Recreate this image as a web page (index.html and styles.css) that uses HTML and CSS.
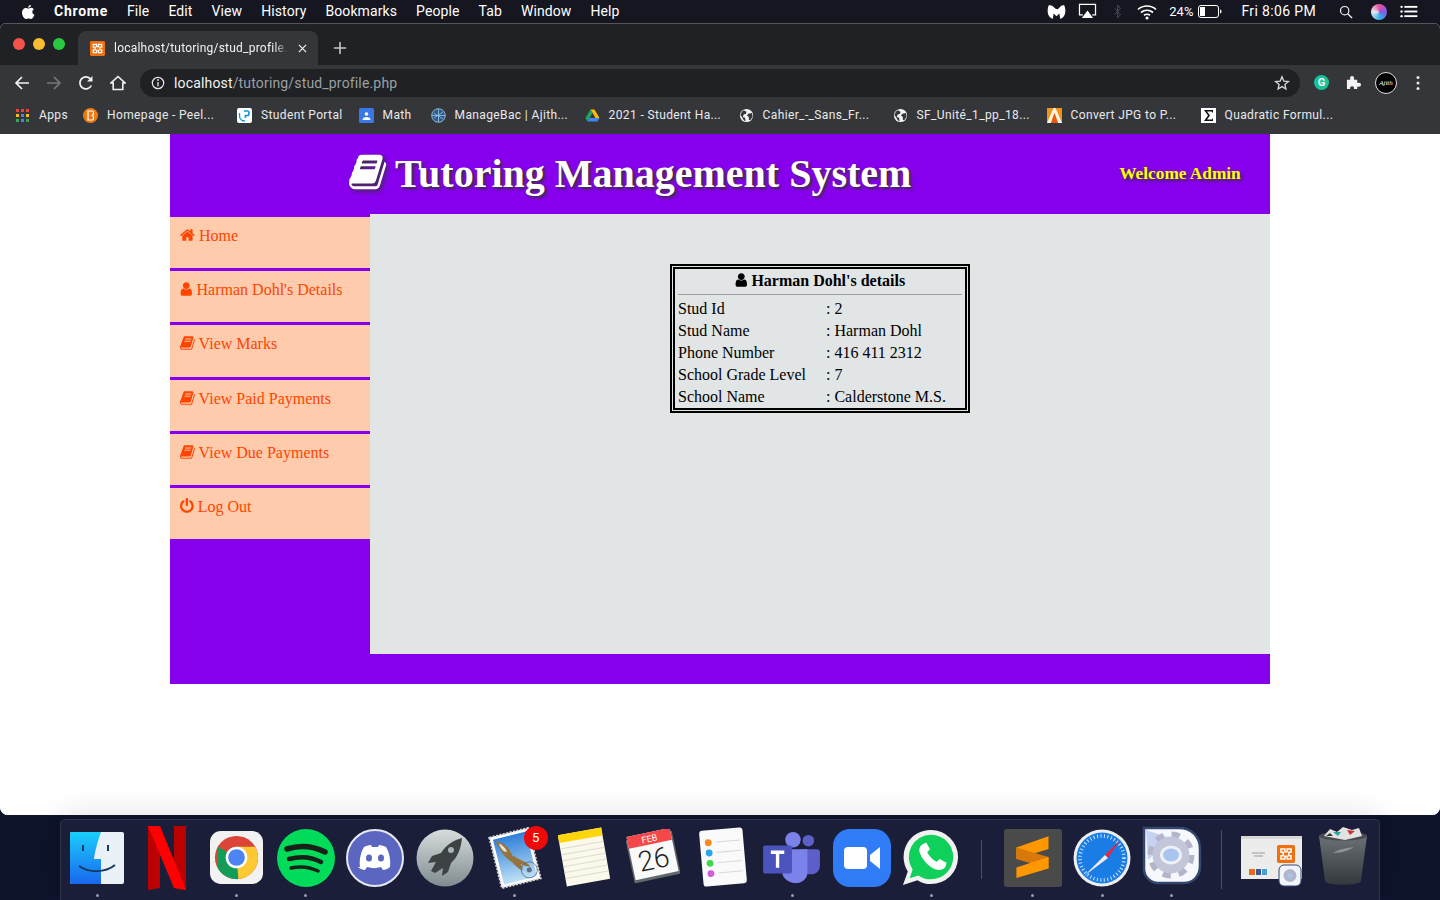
FILE: index.html
```html
<!DOCTYPE html>
<html lang="en">
<head>
<meta charset="utf-8">
<title>Tutoring Management System</title>
<link rel="stylesheet" href="styles.css">
</head>
<body>
<svg class="defs" width="0" height="0" aria-hidden="true">
  <symbol id="i-user" viewBox="192 0 1408 1792"><path d="M1536 1399q0 109-62.5 187t-150.5 78h-854q-88 0-150.5-78t-62.5-187q0-85 8.5-160.5t31.5-152 58.5-131 94-89 134.5-34.5q131 128 313 128t313-128q76 0 134.5 34.5t94 89 58.5 131 31.5 152 8.5 160.5zm-256-887q0 159-112.5 271.5t-271.5 112.5-271.5-112.5-112.5-271.5 112.5-271.5 271.5-112.5 271.5 112.5 112.5 271.5z"/></symbol>
  <symbol id="i-home" viewBox="64 0 1664 1792"><path d="M1472 992v480q0 26-19 45t-45 19h-384v-384h-256v384h-384q-26 0-45-19t-19-45v-480q0-1 .5-3t.5-3l575-474 575 474q1 2 1 6zm223-69l-62 74q-8 9-21 11h-3q-13 0-21-7l-692-577-692 577q-12 8-24 7-13-2-21-11l-62-74q-8-10-7-23.5t11-21.5l719-599q32-26 76-26t76 26l244 204v-195q0-14 9-23t23-9h192q14 0 23 9t9 23v408l219 182q10 8 11 21.5t-7 23.5z"/></symbol>
  <symbol id="i-book" viewBox="64 0 1664 1792"><path d="M1703 478q40 57 18 129l-275 906q-19 64-76.5 107.5t-122.5 43.5h-923q-77 0-148.5-53.5t-99.5-131.5q-24-67-2-127 0-4 3-27t4-37q1-8-3-21.5t-3-19.5q2-11 8-21t16.5-23.5 16.5-23.5q23-38 45-91.5t30-91.5q3-10 .5-30t-.5-28q3-11 17-28t17-23q21-36 42-92t25-90q1-9-2.5-32t.5-28q4-13 22-30.5t22-22.5q19-26 42.5-84.5t27.5-96.5q1-8-3-25.5t-2-26.5q2-8 9-18t18-23 17-21q8-12 16.5-30.5t15-35 16-36 19.5-32 26.5-23.5 36-11.5 47.5 5.5l-1 3q38-9 51-9h761q74 0 114 56t18 130l-274 906q-36 119-71.5 153.5t-128.5 34.5h-869q-27 0-38 15-11 16-1 43 24 70 144 70h923q29 0 56-15.5t35-41.5l300-987q7-22 5-57 38 15 59 43zm-1064 2q-4 13 2 22.5t20 9.5h608q13 0 25.5-9.5t16.5-22.5l21-64q4-13-2-22.5t-20-9.5h-608q-13 0-25.5 9.5t-16.5 22.5zm-83 256q-4 13 2 22.5t20 9.5h608q13 0 25.5-9.5t16.5-22.5l21-64q4-13-2-22.5t-20-9.5h-608q-13 0-25.5 9.5t-16.5 22.5z"/></symbol>
  <symbol id="i-power" viewBox="128 0 1536 1792"><path d="M1664 896q0 156-61 298t-164 245-245 164-298 61-298-61-245-164-164-245-61-298q0-182 80.5-343t226.5-270q43-32 95.5-25t83.5 50q32 42 24.5 94.5t-49.5 84.5q-98 74-151.5 181t-53.5 228q0 104 40.5 198.5t109.5 163.5 163.5 109.5 198.5 40.5 198.5-40.5 163.5-109.5 109.5-163.5 40.5-198.5q0-121-53.5-228t-151.5-181q-42-32-49.5-84.5t24.5-94.5q31-43 84-50t95 25q146 109 226.5 270t80.5 343zm-640-768v640q0 52-38 90t-90 38-90-38-38-90v-640q0-52 38-90t90-38 90 38 38 90z"/></symbol>
  <symbol id="i-globe" viewBox="0 0 16 16"><circle cx="8" cy="8" r="7" fill="#f1f3f4"/><path d="M5 2.500 8 4 7.500 6 5 7 4 9.500 6.500 10.500 7 14 5 13 3.500 10 1.500 7.500 3 4zM10 6l3.800-.8L14.500 9 12 13 10.500 12.500 10.500 9.500 8.500 8z" fill="#35363a"/></symbol>
  <symbol id="i-xampp" viewBox="0 0 16 16"><rect width="16" height="16" rx="1.500" fill="#f0700f"/><path d="M3.500 3.500h3.500v2.500h2V3.500h3.500v3h-2v3h2v3H9V10H7v2.500H3.500v-3h2v-3h-2z" fill="none" stroke="#fff" stroke-width="1.300"/></symbol>
</svg>

<header class="menubar">
  <svg class="apple" viewBox="0 0 14 16"><path d="M10 1c.1 1.200-1.100 2.800-2.800 2.800C7 2.300 8.500 1.100 10 1zM7.200 4.600c.7 0 1.600-.8 3-.8 1.100 0 2.100.6 2.700 1.500-2.300 1.400-1.900 4.500.6 5.500-.6 1.600-2 4.200-3.400 4.200-.9 0-1.300-.6-2.500-.6s-1.600.6-2.500.6C3.300 15 1 11.600 1 8.500c0-2.900 1.900-4.600 3.800-4.600 1 0 1.900.7 2.400.7z" fill="#fff"/></svg>
  <nav class="menus">
    <span class="menu-strong">Chrome</span><span>File</span><span>Edit</span><span>View</span><span>History</span><span>Bookmarks</span><span>People</span><span>Tab</span><span>Window</span><span>Help</span>
  </nav>
  <div class="status">
    <svg class="st st-mb" viewBox="0 0 20 18"><path d="M2 2C.5 5-.5 11 3 15l3 2 1-6 3 3 3-3 1 6 3-2c3.500-4 2.500-10 1-13l-3 1-3 3-1 .5L9 6 5.500 3z" fill="#fff"/></svg>
    <svg class="st st-air" viewBox="0 0 20 18"><path d="M5 12.500H1.500v-11h17v11H15" fill="none" stroke="#fff" stroke-width="1.300"/><path d="M10 8l6 8H4z" fill="#fff"/></svg>
    <svg class="st st-bt" viewBox="0 0 10 18"><path d="M1 5l7 8-3.500 4V1L8 5l-7 8" fill="none" stroke="#4b4d55" stroke-width="1.200"/></svg>
    <svg class="st st-wifi" viewBox="0 0 20 16"><g fill="none" stroke="#fff" stroke-width="1.700"><path d="M1 5.500c5-4.700 13-4.700 18 0"/><path d="M4 8.500c3.500-3 8.500-3 12 0"/><path d="M7 11.300c2-1.400 4-1.400 6 0"/></g><circle cx="10" cy="14" r="1.500" fill="#fff"/></svg>
    <span class="st-pct">24%</span>
    <svg class="st st-bat" viewBox="0 0 24 13"><rect x=".5" y=".5" width="20" height="12" rx="2.500" fill="none" stroke="#fff"/><rect x="2" y="2" width="5" height="9" fill="#fff"/><path d="M22 4.500c1 .3 1.500 1 1.500 2s-.5 1.700-1.500 2z" fill="#fff"/></svg>
    <span class="st-time">Fri 8:06 PM</span>
    <svg class="st st-search" viewBox="0 0 16 16"><circle cx="6.500" cy="6.500" r="4.800" fill="none" stroke="#fff" stroke-width="1.300"/><path d="M10 10l5 5" stroke="#fff" stroke-width="1.500"/></svg>
    <span class="siri"></span>
    <svg class="st st-list" viewBox="0 0 20 14"><g fill="#fff"><circle cx="2" cy="2" r="1.300"/><circle cx="2" cy="7" r="1.300"/><circle cx="2" cy="12" r="1.300"/><rect x="5" y="1" width="14" height="2"/><rect x="5" y="6" width="14" height="2"/><rect x="5" y="11" width="14" height="2"/></g></svg>
  </div>
</header>

<div class="window">
  <div class="tabstrip">
    <div class="lights"><i class="l-red"></i><i class="l-yellow"></i><i class="l-green"></i></div>
    <div class="tab">
      <svg class="fav"><use href="#i-xampp"/></svg>
      <span class="tab-title">localhost/tutoring/stud_profile.</span>
      <svg class="tab-x" viewBox="0 0 10 10"><path d="M1 1l8 8M9 1l-8 8" stroke="#e8eaed" stroke-width="1.400"/></svg>
    </div>
    <svg class="tab-new" viewBox="0 0 12 12"><path d="M6 0v12M0 6h12" stroke="#c4c7c9" stroke-width="1.600"/></svg>
  </div>
  <div class="toolbar">
    <svg class="tb" viewBox="0 0 16 16"><path d="M15 8H2M8 2 2 8l6 6" fill="none" stroke="#f1f3f4" stroke-width="1.700"/></svg>
    <svg class="tb" viewBox="0 0 16 16"><path d="M1 8h13M8 2l6 6-6 6" fill="none" stroke="#75777b" stroke-width="1.700"/></svg>
    <svg class="tb" viewBox="0 0 16 16"><path d="M13.300 10.500A6 6 0 1 1 12.200 3.700" fill="none" stroke="#f1f3f4" stroke-width="1.700"/><path d="M14.500 1v5.500H9z" fill="#f1f3f4"/></svg>
    <svg class="tb" viewBox="0 0 16 16"><path d="M8 1.500 1 8h2.200v6.500h9.600V8H15z" fill="none" stroke="#f1f3f4" stroke-width="1.600"/></svg>
    <div class="omnibox">
      <svg class="info" viewBox="0 0 14 14"><circle cx="7" cy="7" r="5.700" fill="none" stroke="#e8eaed" stroke-width="1.200"/><path d="M7 6v4.300" stroke="#e8eaed" stroke-width="1.300"/><circle cx="7" cy="4" r=".9" fill="#e8eaed"/></svg>
      <span class="url"><b>localhost</b>/tutoring/stud_profile.php</span>
      <svg class="star" viewBox="0 0 16 16"><path d="M8 1.800l1.800 4.300 4.600.4-3.500 3 1 4.500L8 11.600 4.100 14l1-4.500-3.500-3 4.600-.4z" fill="none" stroke="#d6d8da" stroke-width="1.300"/></svg>
    </div>
    <div class="ext">
      <span class="grammarly">G</span>
      <svg class="puzzle" viewBox="0 0 16 16"><path d="M1 5h3.500C4 2 5 1 6.500 1S9 2 8.500 5H12v3.500c3-.5 4 .5 4 2s-1 2.500-4 2V15H8.500c.5-2-.5-3-2-3s-2.500 1-2 3H1z" fill="#f1f3f4"/></svg>
      <span class="avatar">Ajith</span>
      <svg class="dots" viewBox="0 0 4 16"><g fill="#e8eaed"><circle cx="2" cy="2.500" r="1.500"/><circle cx="2" cy="8" r="1.500"/><circle cx="2" cy="13.500" r="1.500"/></g></svg>
    </div>
  </div>
  <div class="bookmarks">
    <div class="bm bm-apps"><svg class="fav" viewBox="0 0 15 15"><g fill="#ea4335"><rect x="1" y="1" width="3" height="3"/><rect x="6" y="1" width="3" height="3"/><rect x="11" y="1" width="3" height="3"/></g><g fill="#fbbc05"><rect x="1" y="6" width="3" height="3"/><rect x="11" y="6" width="3" height="3"/></g><rect x="6" y="6" width="3" height="3" fill="#4285f4"/><g fill="#34a853"><rect x="1" y="11" width="3" height="3"/><rect x="11" y="11" width="3" height="3"/></g><rect x="6" y="11" width="3" height="3" fill="#4285f4"/></svg><span>Apps</span></div>
    <div class="bm bm-long"><svg class="fav" viewBox="0 0 15 15"><circle cx="7.500" cy="7.500" r="7.500" fill="#ef7a12"/><path d="M5 3h4c2 0 2 3.500.3 4.300C11 8 11 12 9 12H5z" fill="none" stroke="#fff" stroke-width="1.200"/></svg><span>Homepage - Peel...</span></div>
    <div class="bm"><svg class="fav" viewBox="0 0 15 15"><rect width="15" height="15" rx="2" fill="#fff"/><path d="M7 3h3.500c2 0 2 4.500 0 4.500H8.500V10" fill="none" stroke="#1497d8" stroke-width="1.700"/><path d="M2.500 5v3c0 3 2.500 5 5.500 5" fill="none" stroke="#1497d8" stroke-width="1.400"/></svg><span>Student Portal</span></div>
    <div class="bm bm-math"><svg class="fav" viewBox="0 0 15 15"><rect width="15" height="15" rx="1.500" fill="#3b78e7"/><circle cx="7.500" cy="6" r="1.800" fill="#fff"/><path d="M3.500 12c0-4 8-4 8 0z" fill="#fff"/></svg><span>Math</span></div>
    <div class="bm bm-long"><svg class="fav" viewBox="0 0 15 15"><circle cx="7.500" cy="7.500" r="6.800" fill="#2a5d8f" stroke="#9fb4c7"/><path d="M3 5l9 6M3 10l9-6M7.500 1v13M1 7.500h13" stroke="#9fc3e3" stroke-width=".8"/></svg><span>ManageBac | Ajith...</span></div>
    <div class="bm bm-long"><svg class="fav" viewBox="0 0 15 15"><path d="M5.500 1.500h4L14.500 10h-4z" fill="#fbbc05"/><path d="M5.500 1.500 .5 10l2 3.500L7.500 5z" fill="#1fa463"/><path d="M2.500 13.500h10l2-3.500H4.500z" fill="#4285f4"/></svg><span>2021 - Student Ha...</span></div>
    <div class="bm bm-long"><svg class="fav"><use href="#i-globe"/></svg><span>Cahier_-_Sans_Fr...</span></div>
    <div class="bm bm-long"><svg class="fav"><use href="#i-globe"/></svg><span>SF_Unité_1_pp_18...</span></div>
    <div class="bm bm-long"><svg class="fav" viewBox="0 0 15 15"><rect width="15" height="15" fill="#f29316"/><path d="M0 15 6.500 0h2L15 15H11L7.500 5 4 15z" fill="#fff" opacity=".9"/><path d="M4 15l3.500-10L11 15z" fill="#e8590c"/></svg><span>Convert JPG to P...</span></div>
    <div class="bm bm-long"><svg class="fav" viewBox="0 0 15 15"><rect width="15" height="15" fill="#fff"/><path d="M3 2h9v3l-1.500-1.500H6L9 7.500 6 11.500h5L12 10v3H3l4-5.500z" fill="#111"/></svg><span>Quadratic Formul...</span></div>
  </div>

  <main class="viewport">
    <div class="site">
      <div class="site-head">
        <h1 class="site-title"><svg class="title-icon"><use href="#i-book"/></svg> Tutoring Management System</h1>
        <div class="welcome">Welcome Admin</div>
      </div>
      <div class="site-body">
        <ul class="side">
          <li><a><svg class="ico w-wide"><use href="#i-home"/></svg> Home</a></li>
          <li><a><svg class="ico w-user"><use href="#i-user"/></svg> Harman Dohl's Details</a></li>
          <li><a><svg class="ico w-wide"><use href="#i-book"/></svg> View Marks</a></li>
          <li><a><svg class="ico w-wide"><use href="#i-book"/></svg> View Paid Payments</a></li>
          <li><a><svg class="ico w-wide"><use href="#i-book"/></svg> View Due Payments</a></li>
          <li><a><svg class="ico w-power"><use href="#i-power"/></svg> Log Out</a></li>
        </ul>
        <section class="content">
          <div class="card">
            <h3 class="card-title"><svg class="ico w-user"><use href="#i-user"/></svg> Harman Dohl's details</h3>
            <div class="rule"></div>
            <table class="details">
              <tr><td class="k">Stud Id</td><td>: 2</td></tr>
              <tr><td class="k">Stud Name</td><td>: Harman Dohl</td></tr>
              <tr><td class="k">Phone Number</td><td>: 416 411 2312</td></tr>
              <tr><td class="k">School Grade Level</td><td>: 7</td></tr>
              <tr><td class="k">School Name</td><td>: Calderstone M.S.</td></tr>
            </table>
          </div>
        </section>
      </div>
      <div class="site-foot"></div>
    </div>
  </main>
</div>

<footer class="dock-area">
  <div class="dock">
    <div class="app run"><svg class="d-finder" viewBox="0 0 54 52"><defs><linearGradient id="g-finder" x1="0" y1="0" x2="0" y2="1"><stop offset="0" stop-color="#19cffc"/><stop offset="1" stop-color="#1a66ee"/></linearGradient></defs><rect width="54" height="52" rx="2" fill="#eaf2f8"/><path d="M2 0h29c-3 8-6 19-7 27h7v25H2a2 2 0 0 1-2-2V2a2 2 0 0 1 2-2z" fill="url(#g-finder)"/><path d="M13 13v6M38 13v6" stroke="#163c5c" stroke-width="2"/><path d="M9 34c10 7 26 7 36-1" fill="none" stroke="#163c5c" stroke-width="2"/></svg></div>
    <div class="app"><svg class="d-netflix" viewBox="0 0 38 66"><path d="M0 1h12v62L0 65z" fill="#b00"/><path d="M26 1h12v64l-12-2z" fill="#b00"/><path d="M0 1h12l26 64-12-2z" fill="#f00"/></svg></div>
    <div class="app run"><svg class="d-chrome" viewBox="0 0 54 54"><rect width="54" height="54" rx="11" fill="#f2f2f2"/><circle cx="27" cy="27" r="22" fill="#db4437"/><path d="M27 27 8 38a22 22 0 0 0 21 11z" fill="#0f9d58"/><path d="M27 27l2 22A22 22 0 0 0 49 27 22 22 0 0 0 46 16H27z" fill="#fcc934"/><path d="M8 16 8 38 27 27z" fill="#0f9d58"/><circle cx="27" cy="27" r="11" fill="#fff"/><circle cx="27" cy="27" r="8.500" fill="#4d84f3"/></svg></div>
    <div class="app run"><svg class="d-58" viewBox="0 0 58 58"><circle cx="29" cy="29" r="29" fill="#00dc5a"/><g fill="none" stroke="#17211a" stroke-linecap="round"><path d="M10 20c13-4 26-3 38 3" stroke-width="5.500"/><path d="M12 30c11-3 23-2 32 3" stroke-width="4.500"/><path d="M14 39c9-2 19-1 27 3" stroke-width="3.500"/></g></svg></div>
    <div class="app"><svg class="d-58" viewBox="0 0 58 58"><circle cx="29" cy="29" r="28" fill="#5a66bf" stroke="#e6e8f4" stroke-width="2"/><path d="M14 38c-1-8 1-15 4-20 3-1.500 6-2 7-2l1 2h6l1-2c2 0 5 1 7 2 3 5 5 12 4 20-2 2-5 3-7 3l-2-3c-5 1.500-9 1.500-14 0l-2 3c-2 0-5-1-7-3z" fill="#fff"/><ellipse cx="23" cy="29" rx="3" ry="3.500" fill="#5a66bf"/><ellipse cx="35" cy="29" rx="3" ry="3.500" fill="#5a66bf"/></svg></div>
    <div class="app"><svg class="d-58" viewBox="0 0 58 58"><defs><linearGradient id="g-rocket" x1="0" y1="0" x2="0" y2="1"><stop offset="0" stop-color="#d8dcdc"/><stop offset="1" stop-color="#7f8c8f"/></linearGradient></defs><circle cx="29" cy="29" r="28.500" fill="url(#g-rocket)"/><path d="M46 9c-8 2-16 7-21 15l-9 3-4 7 8-1-5 9 4 2 8-5-1 8 6-4 3-9c7-6 10-15 11-25z" fill="#3d4245"/><circle cx="35" cy="21" r="3" fill="#aab3b5"/></svg></div>
    <div class="app run"><svg class="d-mail" viewBox="0 0 60 62"><defs><linearGradient id="g-sky" x1="0" y1="0" x2="0" y2="1"><stop offset="0" stop-color="#2f7fd8"/><stop offset="1" stop-color="#bfe0f6"/></linearGradient></defs><g transform="rotate(-14 31 31)"><rect x="11" y="5" width="40" height="52" fill="#fff" stroke="#d5d5d5" stroke-width="2" stroke-dasharray="2 1.500"/><rect x="14" y="8" width="34" height="46" fill="url(#g-sky)"/><path d="M16 10c6 2 10 7 12 13l1 5 8 7c3 2 5 4 7 8-4-1-6-2-9-5 1 3 1 5 0 7-3-3-6-7-8-11-4-4-7-9-8-14z" fill="#96743e"/><path d="M19 13c3 2 5 6 6 10l-3-1c-2-3-3-6-3-9z" fill="#e9e2cf"/><circle cx="42" cy="46" r="8" fill="none" stroke="#5a6d86" stroke-width=".8"/><circle cx="42" cy="46" r="2.500" fill="#5a6d86"/></g></svg><span class="badge">5</span></div>
    <div class="app"><svg class="d-notes" viewBox="0 0 52 62"><g transform="rotate(-10 26 31)"><rect x="4" y="5" width="44" height="52" fill="#fbf9ec"/><rect x="4" y="5" width="44" height="8" fill="#fdd60a"/><path d="M4 19h44M4 25h44M4 31h44M4 37h44M4 43h44M4 49h44" stroke="#d8d6c8" stroke-width=".8"/></g></svg></div>
    <div class="app"><svg class="d-cal" viewBox="0 0 54 56"><g transform="rotate(-12 27 27)"><rect x="3.500" y="6" width="47" height="44" rx="1" fill="#5f6a6d"/><rect x="5" y="3" width="44" height="44" fill="#fafafa"/><rect x="5" y="3" width="44" height="12" fill="#f44848"/><text class="cal-m" x="27" y="12.500">FEB</text><text class="cal-d" x="27" y="40">26</text></g></svg></div>
    <div class="app"><svg class="d-rem" viewBox="0 0 50 58"><g transform="rotate(-5 25 29)"><rect x="4" y="2" width="42" height="54" rx="3" fill="#fafafa"/><circle cx="12" cy="14" r="3.300" fill="#f58a1f"/><circle cx="12" cy="24" r="3.300" fill="#25a6ee"/><circle cx="12" cy="34" r="3.300" fill="#3fd84c"/><circle cx="12" cy="44" r="3.300" fill="#d45ae0"/><path d="M19 14h24M19 24h24M19 34h24M19 44h24" stroke="#d9d9d9"/></g></svg></div>
    <div class="app run"><svg class="d-teams" viewBox="0 0 60 54"><circle cx="47" cy="9" r="6" fill="#5b5fc7"/><circle cx="31" cy="8" r="8" fill="#7b83eb"/><path d="M38 18h18c2 0 3 1 3 3v14c0 6-5 9-9 9H38z" fill="#5b5fc7"/><path d="M20 18h26v24c0 7-6 11-12 11s-14-4-14-11z" fill="#7b83eb"/><rect x="0" y="14" width="30" height="29" rx="2" fill="#4b53bc"/><path d="M8 21h14M15 21v16" stroke="#fff" stroke-width="3.500"/></svg></div>
    <div class="app"><svg class="d-58" viewBox="0 0 58 58"><rect width="58" height="58" rx="17" fill="#2f7cf6"/><rect x="11" y="18" width="23" height="22" rx="4" fill="#fff"/><path d="M37 26l10-8v22l-10-8z" fill="#fff"/></svg></div>
    <div class="app run"><svg class="d-58" viewBox="0 0 60 60"><path d="M30 1a28 28 0 0 1 0 56c-5 0-10-1-14-4L1 58l5-14A28 28 0 0 1 30 1z" fill="#f2f2f2"/><path d="M30 6a23 23 0 0 1 0 46c-5 0-9-1-13-4l-9 3 3-9A23 23 0 0 1 30 6z" fill="#0fd05a"/><path d="M21 16c-3 2-4 6-2 10 3 7 9 13 16 16 4 1 8 0 10-3l1-4-7-4-3 3c-4-2-8-6-10-10l3-3-4-7z" fill="#fff"/></svg></div>
    <div class="sep sep-short"></div>
    <div class="app run"><svg class="d-58" viewBox="0 0 58 58"><rect width="58" height="58" rx="3" fill="#4a4a4a"/><path d="M44.500 7.300 12.400 18.500V30L44.500 20z" fill="#ff9800"/><path d="M12.400 18.500 44.500 28v11.500L12.400 30z" fill="#d9780a"/><path d="M44.500 28 12.400 38.500V49L44.500 39.500z" fill="#ff9800"/></svg></div>
    <div class="app run"><svg class="d-58" viewBox="0 0 58 58"><circle cx="29" cy="29" r="28.500" fill="#eee"/><circle cx="29" cy="29" r="25.500" fill="#1a7de6"/><circle cx="29" cy="29" r="22" fill="none" stroke="#cfe6fb" stroke-width="3.500" stroke-dasharray="1 2.500"/><path d="M32 26l15-15-12 18z" fill="#e8263a"/><path d="M32 26 11 47l24-18z" fill="#eee"/></svg></div>
    <div class="app run"><svg class="d-prefs" viewBox="0 0 60 60"><path d="M2 2h35c12 0 21 8 21 21v17c0 10-7 17-16 17H16C8 57 2 50 2 43z" fill="#f7f8fd" stroke="#34486f" stroke-width="2.500"/><path d="M4 4 28 12 6 34z" fill="#c5d2f0"/><g transform="translate(29 29)"><circle r="20" fill="none" stroke="#b3b5cb" stroke-width="7" stroke-dasharray="8 7.700"/><circle r="18.500" fill="#c3c5d8"/><ellipse rx="11" ry="9.500" fill="#eef0f7"/><ellipse rx="8" ry="6.500" fill="#a9c4ee"/></g></svg></div>
    <div class="sep"></div>
    <div class="app"><svg class="d-xampp" viewBox="0 0 64 52"><rect width="61" height="43" fill="#ececec"/><rect width="61" height="3" fill="#d8d8d8"/><path d="M11 17h13M13 20h9" stroke="#9a9a9a"/><use href="#i-xampp" x="36" y="9" width="18" height="18"/><rect x="8" y="33" width="6" height="6" fill="#e56a19"/><rect x="15" y="33" width="5" height="6" fill="#3b5998"/><rect x="21" y="33" width="5" height="6" fill="#4aa1d8"/><rect x="38" y="29" width="22" height="21" rx="5" fill="#f2f5fb" stroke="#34486f"/><circle cx="49" cy="39.500" r="6.500" fill="#b3b5cb"/><circle cx="49" cy="39.500" r="2.500" fill="#a9c4ee"/></svg></div>
    <div class="app"><svg class="d-trash" viewBox="0 0 54 60"><defs><linearGradient id="g-trash" x1="0" y1="0" x2="0" y2="1"><stop offset="0" stop-color="#6a7073"/><stop offset="1" stop-color="#33383b"/></linearGradient></defs><path d="M3 9h48l-6 45c-1 5-35 5-36 0z" fill="url(#g-trash)"/><path d="M17 26c6-4 14-5 21-6-4 3-13 6-21 6z" fill="#8f9497"/><ellipse cx="27" cy="9" rx="24" ry="4.500" fill="#484c50"/><path d="M8 9l6-7 7 3 6-5 9 3 7-2 3 8-17 4z" fill="#e2e2e2"/><path d="M17 5l5 4 3-4z" fill="#27a6a0"/><path d="M31 3l3 5 5-4z" fill="#c33"/><path d="M10 9l4-3 3 3z" fill="#333"/></svg></div>
  </div>
</footer>
</body>
</html>
```

FILE: styles.css
```css
* { box-sizing: border-box; }

html, body {
  margin: 0;
  height: 900px;
  overflow: hidden;
}

body {
  display: flex;
  flex-direction: column;
  background: #0d142b;
  font-family: "Liberation Sans", sans-serif;
}

.defs { position: absolute; }

symbol { overflow: visible; }

/* macOS menu bar */
.menubar {
  height: 23px;
  flex: none;
  display: flex;
  align-items: center;
  padding-left: 21px;
  background: #15161f;
  color: #fff;
  font: 14px/23px Roboto, sans-serif;
}

.apple { width: 14px; height: 16px; margin-right: 19px; }

.menus { display: flex; gap: 19px; letter-spacing: .1px; }

.menu-strong { font-weight: 700; letter-spacing: .75px; }

.status { margin-left: auto; display: flex; align-items: center; font-size: 13px; }

.st { display: block; flex: none; }
.st-mb { width: 19px; height: 17px; margin-right: 12px; }
.st-air { width: 19px; height: 17px; margin-right: 17.5px; }
.st-bt { width: 8px; height: 15px; margin-right: 15px; }
.st-wifi { width: 20px; height: 16px; margin-right: 12px; }
.st-pct { margin-right: 5px; }
.st-bat { width: 24px; height: 13px; margin-right: 19px; }
.st-time { font-size: 14px; letter-spacing: .35px; margin-right: 23px; }
.st-search { width: 14px; height: 14px; margin-right: 18px; }
.siri {
  width: 16px;
  height: 16px;
  border-radius: 50%;
  margin-right: 12px;
  background: conic-gradient(#e94fa0, #7f5be6, #36b3ea, #e8e8f0, #e94fa0);
}
.st-list { width: 20px; height: 13px; margin-right: 21px; }

/* Browser window */
.window {
  height: 792px;
  flex: none;
  display: flex;
  flex-direction: column;
  border-radius: 6px 6px 8px 8px;
  overflow: hidden;
  background: #fff;
}

.tabstrip {
  height: 42px;
  flex: none;
  display: flex;
  align-items: flex-end;
  background: #202124;
  border-top: 1px solid #55565a;
}

.lights { display: flex; gap: 8px; align-self: flex-start; padding: 14px 0 0 13px; width: 78px; }
.lights i { width: 12px; height: 12px; border-radius: 50%; }
.l-red { background: #f5524c; }
.l-yellow { background: #f6bd30; }
.l-green { background: #2ac840; }

.tab {
  width: 240px;
  height: 34px;
  display: flex;
  align-items: center;
  padding-left: 12px;
  background: #35363a;
  border-radius: 8px 8px 0 0;
  color: #f1f3f4;
  font: 12px Roboto, sans-serif;
  letter-spacing: .22px;
}

.fav { width: 15px; height: 15px; flex: none; }

.tab-title {
  width: 176px;
  margin-left: 9px;
  white-space: nowrap;
  -webkit-mask-image: linear-gradient(to right, #000 160px, transparent 175px);
  mask-image: linear-gradient(to right, #000 160px, transparent 175px);
}
.tab-x { width: 9px; height: 9px; margin-left: 8px; }
.tab-new { width: 12px; height: 12px; margin: 0 0 11px 16px; }

.toolbar {
  height: 35px;
  flex: none;
  display: flex;
  align-items: center;
  padding-left: 14px;
  gap: 16px;
  background: #35363a;
}

.tb { width: 16px; height: 16px; flex: none; }

.omnibox {
  width: 1160px;
  height: 28px;
  display: flex;
  align-items: center;
  margin-left: -2px;
  padding: 0 11px;
  border-radius: 14px;
  background: #202124;
  color: #9aa0a6;
  font: 14px Roboto, sans-serif;
  letter-spacing: .16px;
}

.omnibox b { font-weight: 400; color: #f1f3f4; }
.info { width: 14px; height: 14px; margin-right: 9px; }
.url { flex: 1; }
.star { width: 16px; height: 16px; margin-right: -1px; }

.ext { display: flex; align-items: center; margin-left: -2px; }
.grammarly {
  width: 15px;
  height: 15px;
  border-radius: 50%;
  background: #15c39a;
  color: #fff;
  font: 700 11px/15px Roboto, sans-serif;
  text-align: center;
}
.puzzle { width: 15px; height: 15px; margin-left: 17px; }
.avatar {
  width: 22px;
  height: 22px;
  margin-left: 14px;
  border-radius: 50%;
  border: 1px solid #ddd;
  background: #000;
  color: #fff;
  font: italic 7px/20px "Liberation Serif", serif;
  text-align: center;
}
.dots { width: 4px; height: 16px; margin-left: 19px; }

.bookmarks {
  height: 34px;
  flex: none;
  display: flex;
  align-items: center;
  padding: 0 0 4px 15px;
  gap: 16px;
  background: #35363a;
  color: #e8eaed;
  font: 12px Roboto, sans-serif;
  letter-spacing: .37px;
}

.bm { display: flex; align-items: center; gap: 9px; white-space: nowrap; }
.bm-apps { width: 52px; }
.bm-math { width: 56px; }
.bm-long { width: 138px; }

/* Page */
.viewport { flex: 1; background: #fff; }

.site {
  width: 1100px;
  margin: 0 auto;
  background: #8700ee;
  font: 16px "Liberation Serif", serif;
}

.site-head {
  height: 80px;
  display: flex;
  align-items: center;
  padding-bottom: 2px;
}

.site-title {
  flex: 1;
  margin: 0;
  color: #fff;
  font-size: 40px;
  font-weight: 700;
  text-align: center;
  text-shadow: 2px 2px 3px #333;
}

.title-icon {
  width: .93em;
  height: 1em;
  vertical-align: -5px;
  fill: #fff;
  overflow: visible;
  filter: drop-shadow(2px 2px 2px #333);
}

.welcome {
  width: 180px;
  padding-top: 2px;
  color: #ff0;
  font-size: 17.3px;
  font-weight: 700;
  text-align: center;
  text-shadow: 2px 2px 3px #333;
}

.site-body { display: flex; align-items: flex-start; }

.side {
  width: 200px;
  margin: 3px 0 0;
  padding: 0;
  list-style: none;
}

.side li {
  height: 54.2px;
  padding: 10px;
  background: #fecbad;
  border-bottom: 3px solid #8700ee;
  color: #ff4500;
}

.side li:last-child { border-bottom: 0; height: 51.2px; }

.ico {
  height: 1em;
  vertical-align: -2px;
  fill: currentColor;
  overflow: visible;
}
.w-wide { width: .93em; }
.w-user { width: .786em; }
.w-power { width: .857em; }

.content {
  flex: 1;
  height: 440px;
  padding-top: 50px;
  background: #e1e5e6;
}

.card {
  width: 300px;
  height: 149px;
  margin: 0 auto;
  padding: 2px 3px;
  border: 5px double #000;
}

.card-title { margin: 0; font-size: 16px; line-height: 20px; text-align: center; }

.rule { height: 1px; margin: 3px 0; background: #9d9d9f; }

.details { border-collapse: collapse; }
.details td { height: 22px; padding: 0; }
.details .k { width: 148px; }

.site-foot { height: 30px; background: #8700ee; }

/* Dock */
.dock-area {
  flex: 1;
  display: flex;
  justify-content: center;
  padding-top: 4px;
}

.dock {
  width: 1320px;
  height: 81px;
  display: flex;
  align-items: flex-start;
  padding: 5px 1.25px 0;
  background: #1b1e38;
  border: 1px solid #30334d;
  border-bottom: 0;
  border-radius: 5px 5px 0 0;
  box-shadow: 0 -4px 30px rgba(0, 0, 0, .12);
}

.app {
  position: relative;
  width: 69.5px;
  height: 72px;
  flex: none;
  display: flex;
  justify-content: center;
}

.d-58 { width: 58px; height: 58px; margin-top: 4px; }
.d-finder { width: 54px; height: 52px; margin-top: 7px; }
.d-netflix { width: 38px; height: 66px; }
.d-chrome { width: 53px; height: 53px; margin-top: 6px; }
.d-mail { width: 60px; height: 62px; margin-top: 2px; }
.d-notes { width: 52px; height: 62px; margin-top: 1px; }
.d-cal { width: 54px; height: 56px; margin-top: 4px; }
.d-rem { width: 52px; height: 60px; margin-top: 2px; }
.d-teams { width: 58px; height: 52px; margin-top: 7px; }
.d-prefs { width: 60px; height: 60px; margin-top: 1px; }
.d-xampp { width: 64px; height: 52px; margin-top: 11px; }
.d-trash { width: 54px; height: 60px; margin-top: 2px; }

.run::after {
  content: "";
  position: absolute;
  left: 50%;
  bottom: 0;
  width: 3px;
  height: 3px;
  margin-left: -1.500px;
  border-radius: 50%;
  background: #9a9ca8;
}

.sep {
  width: 1px;
  height: 59px;
  flex: none;
  margin: 5px 16px 0 15px;
  background: #4b4d62;
}

.sep-short { height: 39px; margin-top: 15px; }

.badge {
  position: absolute;
  top: 1px;
  right: 1px;
  width: 24px;
  height: 24px;
  border-radius: 50%;
  background: #ee0a0a;
  color: #fff;
  font: 13px/24px Roboto, sans-serif;
  text-align: center;
}

.cal-m { fill: #fff; font: 9px Roboto, sans-serif; text-anchor: middle; }
.cal-d { fill: #222; font: 300 28px Roboto, sans-serif; text-anchor: middle; }
```
